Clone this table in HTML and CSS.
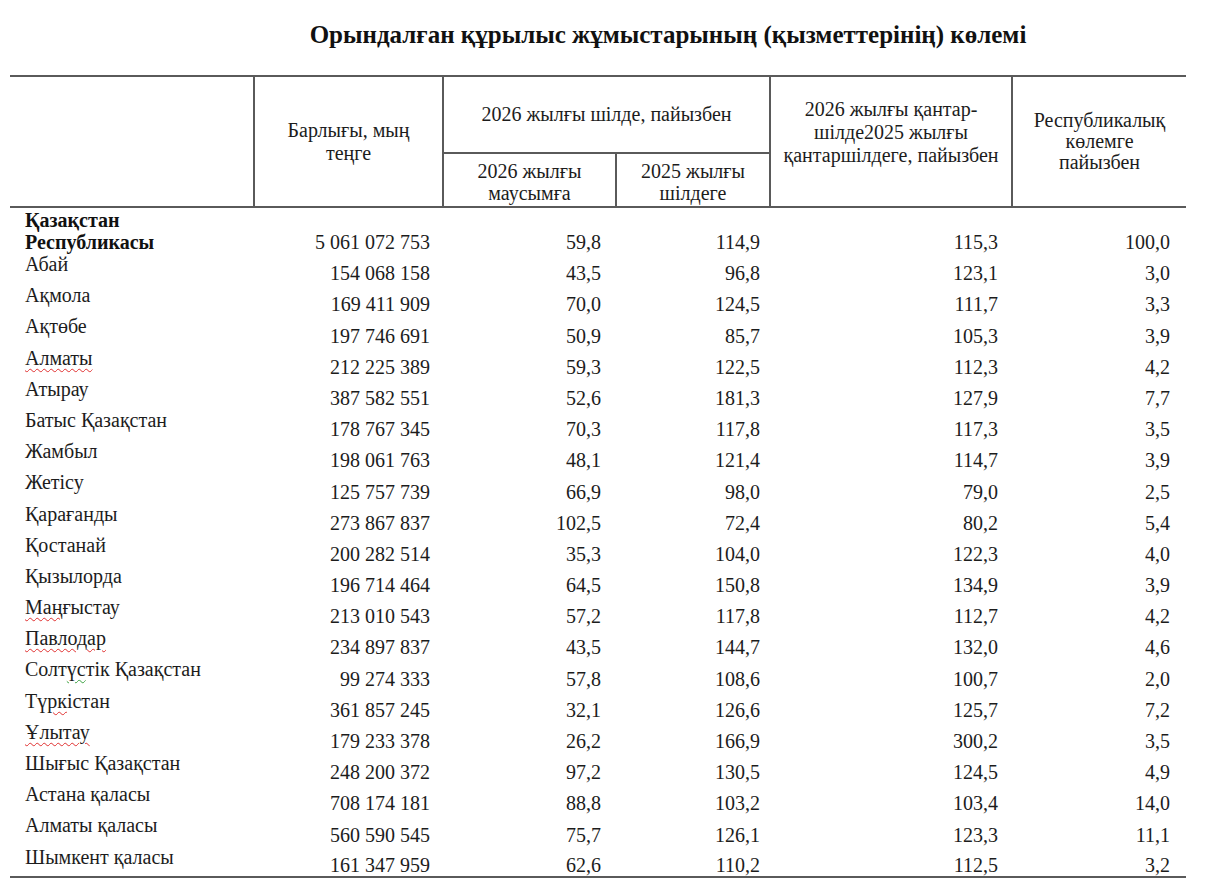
FILE: index.html
```html
<!DOCTYPE html>
<html lang="kk">
<head>
<meta charset="utf-8">
<title>Орындалған құрылыс жұмыстарының көлемі</title>
<link rel="stylesheet" href="styles.css">
</head>
<body>
<div class="page">
  <h1 class="title">Орындалған құрылыс жұмыстарының (қызметтерінің) көлемі</h1>
  <table class="data">
    <colgroup>
      <col class="c-name"><col class="c-total"><col class="c-m"><col class="c-y"><col class="c-cum"><col class="c-share">
    </colgroup>
    <thead>
      <tr class="h1">
        <th rowspan="2" class="blank"></th>
        <th rowspan="2" class="h-total">Барлығы, мың<br>теңге</th>
        <th colspan="2" class="h-group">2026 жылғы шілде, пайызбен</th>
        <th rowspan="2" class="h-cum">2026 жылғы қантар-<br>шілде2025 жылғы<br>қантаршілдеге, пайызбен</th>
        <th rowspan="2" class="h-share">Республикалық<br>көлемге<br>пайызбен</th>
      </tr>
      <tr class="h2">
        <th class="h-sub">2026 жылғы<br>маусымға</th>
        <th class="h-sub">2025 жылғы<br>шілдеге</th>
      </tr>
    </thead>
    <tbody>
      <tr class="total"><td class="name">Қазақстан<br>Республикасы</td><td class="num n1">5 061 072 753</td><td class="num n2">59,8</td><td class="num n3">114,9</td><td class="num n4">115,3</td><td class="num n5">100,0</td></tr>
      <tr><td class="name">Абай</td><td class="num n1">154 068 158</td><td class="num n2">43,5</td><td class="num n3">96,8</td><td class="num n4">123,1</td><td class="num n5">3,0</td></tr>
      <tr><td class="name">Ақмола</td><td class="num n1">169 411 909</td><td class="num n2">70,0</td><td class="num n3">124,5</td><td class="num n4">111,7</td><td class="num n5">3,3</td></tr>
      <tr><td class="name">Ақтөбе</td><td class="num n1">197 746 691</td><td class="num n2">50,9</td><td class="num n3">85,7</td><td class="num n4">105,3</td><td class="num n5">3,9</td></tr>
      <tr><td class="name"><span class="spell">Алматы</span></td><td class="num n1">212 225 389</td><td class="num n2">59,3</td><td class="num n3">122,5</td><td class="num n4">112,3</td><td class="num n5">4,2</td></tr>
      <tr><td class="name">Атырау</td><td class="num n1">387 582 551</td><td class="num n2">52,6</td><td class="num n3">181,3</td><td class="num n4">127,9</td><td class="num n5">7,7</td></tr>
      <tr><td class="name">Батыс Қазақстан</td><td class="num n1">178 767 345</td><td class="num n2">70,3</td><td class="num n3">117,8</td><td class="num n4">117,3</td><td class="num n5">3,5</td></tr>
      <tr><td class="name">Жамбыл</td><td class="num n1">198 061 763</td><td class="num n2">48,1</td><td class="num n3">121,4</td><td class="num n4">114,7</td><td class="num n5">3,9</td></tr>
      <tr><td class="name">Жетісу</td><td class="num n1">125 757 739</td><td class="num n2">66,9</td><td class="num n3">98,0</td><td class="num n4">79,0</td><td class="num n5">2,5</td></tr>
      <tr><td class="name">Қарағанды</td><td class="num n1">273 867 837</td><td class="num n2">102,5</td><td class="num n3">72,4</td><td class="num n4">80,2</td><td class="num n5">5,4</td></tr>
      <tr><td class="name">Қостанай</td><td class="num n1">200 282 514</td><td class="num n2">35,3</td><td class="num n3">104,0</td><td class="num n4">122,3</td><td class="num n5">4,0</td></tr>
      <tr><td class="name">Қызылорда</td><td class="num n1">196 714 464</td><td class="num n2">64,5</td><td class="num n3">150,8</td><td class="num n4">134,9</td><td class="num n5">3,9</td></tr>
      <tr><td class="name"><span class="spell">Маң</span>ғыстау</td><td class="num n1">213 010 543</td><td class="num n2">57,2</td><td class="num n3">117,8</td><td class="num n4">112,7</td><td class="num n5">4,2</td></tr>
      <tr><td class="name"><span class="spell">Павлодар</span></td><td class="num n1">234 897 837</td><td class="num n2">43,5</td><td class="num n3">144,7</td><td class="num n4">132,0</td><td class="num n5">4,6</td></tr>
      <tr><td class="name">Солт<span class="grammar">үс</span>тік Қазақстан</td><td class="num n1">99 274 333</td><td class="num n2">57,8</td><td class="num n3">108,6</td><td class="num n4">100,7</td><td class="num n5">2,0</td></tr>
      <tr><td class="name">Тү<span class="spell">рк</span>істан</td><td class="num n1">361 857 245</td><td class="num n2">32,1</td><td class="num n3">126,6</td><td class="num n4">125,7</td><td class="num n5">7,2</td></tr>
      <tr><td class="name"><span class="spell">Ұлытау</span></td><td class="num n1">179 233 378</td><td class="num n2">26,2</td><td class="num n3">166,9</td><td class="num n4">300,2</td><td class="num n5">3,5</td></tr>
      <tr><td class="name">Шығыс Қазақстан</td><td class="num n1">248 200 372</td><td class="num n2">97,2</td><td class="num n3">130,5</td><td class="num n4">124,5</td><td class="num n5">4,9</td></tr>
      <tr><td class="name">Астана қаласы</td><td class="num n1">708 174 181</td><td class="num n2">88,8</td><td class="num n3">103,2</td><td class="num n4">103,4</td><td class="num n5">14,0</td></tr>
      <tr><td class="name">Алматы қаласы</td><td class="num n1">560 590 545</td><td class="num n2">75,7</td><td class="num n3">126,1</td><td class="num n4">123,3</td><td class="num n5">11,1</td></tr>
      <tr><td class="name">Шымкент қаласы</td><td class="num n1">161 347 959</td><td class="num n2">62,6</td><td class="num n3">110,2</td><td class="num n4">112,5</td><td class="num n5">3,2</td></tr>
    </tbody>
  </table>
</div>
</body>
</html>
```
FILE: styles.css
```css
html, body {
  margin: 0;
  padding: 0;
  background: #ffffff;
}

body {
  font-family: "Liberation Serif", "Times New Roman", serif;
  color: #1c1c1c;
  font-size: 20px;
}

.page {
  width: 1206px;
  padding-top: 20px;
}

.title {
  margin: 0 0 25px 0;
  padding-left: 130px;
  text-align: center;
  font-size: 25px;
  line-height: 30px;
  font-weight: bold;
  color: #111111;
}

.data {
  margin-left: 10px;
  width: 1176px;
  table-layout: fixed;
  border-collapse: collapse;
}

.c-name { width: 244px; }
.c-total { width: 189px; }
.c-m { width: 173px; }
.c-y { width: 154px; }
.c-cum { width: 242px; }
.c-share { width: 174px; }

.data th {
  font-weight: normal;
  text-align: center;
  vertical-align: middle;
  padding: 0;
  border: 2px solid #5a5a5a;
}

.data thead th.blank {
  border-left: none;
}

.data thead th.h-share {
  border-right: none;
  line-height: 21px;
}

.h1 th {
  line-height: 23px;
}

.h1 {
  height: 77px;
}

.h2 {
  height: 54px;
}

.h-total {
  padding-top: 2px;
}

.h-cum {
  line-height: 24px;
  padding-bottom: 18px !important;
}

.h-sub {
  line-height: 22px;
  padding-top: 3px !important;
}

.data td {
  padding: 0;
  line-height: 22px;
  white-space: nowrap;
}

.data tbody tr {
  height: 31.2px;
}

.data tbody tr.total {
  height: 46px;
}

.data tbody tr:last-child td {
  border-bottom: 2px solid #5a5a5a;
}

.name {
  vertical-align: top;
  text-align: left;
  padding-left: 15px !important;
}

.total .name {
  font-weight: bold;
  color: #111111;
  padding-top: 1px !important;
}

.num {
  vertical-align: bottom;
  text-align: right;
}

.n1 { padding-right: 13px !important; }
.n2 { padding-right: 15px !important; }
.n3 { padding-right: 10px !important; }
.n4 { padding-right: 14px !important; }
.n5 { padding-right: 16px !important; }

.spell {
  text-decoration: underline wavy #e03030;
  text-decoration-thickness: 1px;
  text-underline-offset: 3px;
}

.grammar {
  text-decoration: underline wavy #3aa040;
  text-decoration-thickness: 1px;
  text-underline-offset: 3px;
}
```
